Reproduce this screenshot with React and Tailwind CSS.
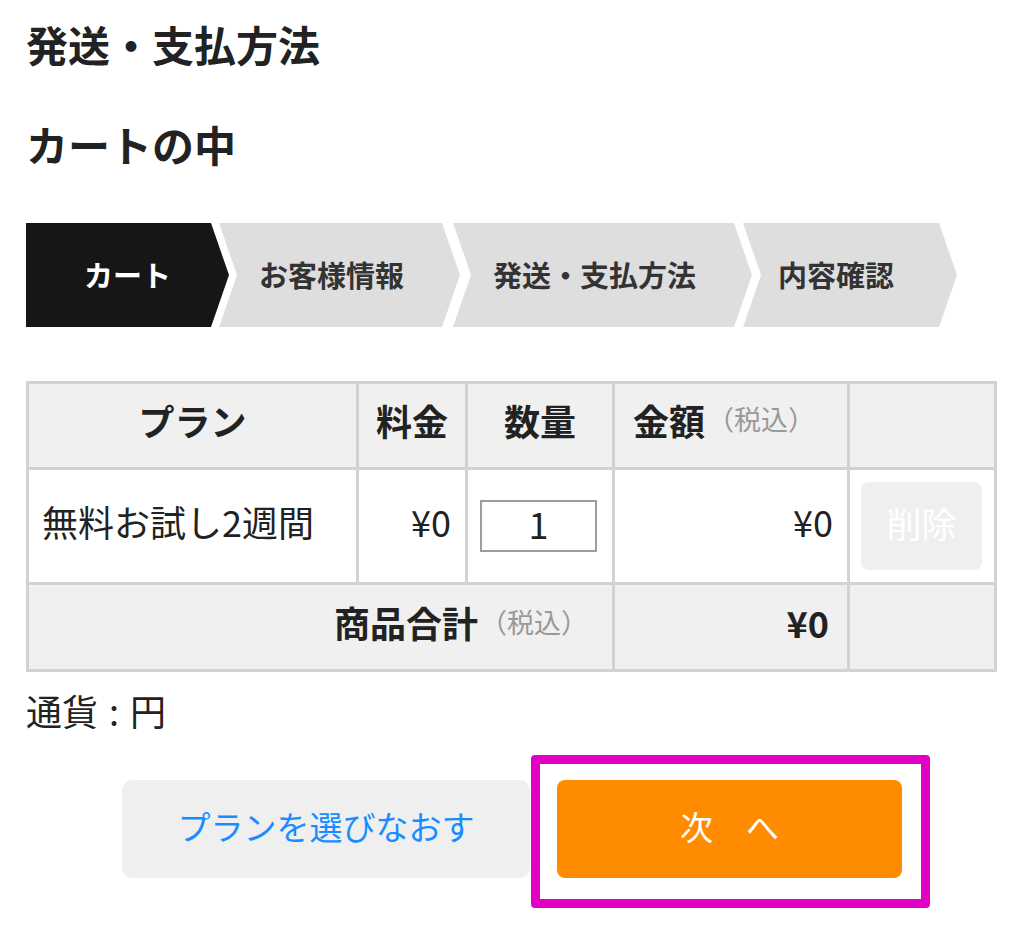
import React from "react";

const FONT = "font-['Noto_Sans_CJK_JP','Noto_Sans',sans-serif]";

const steps = [
  { label: "カート", active: true, cls: "w-[203px] pl-[58px]" },
  { label: "お客様情報", cls: "w-[241px] ml-[-10px] pl-[40px]" },
  { label: "発送・支払方法", cls: "w-[299px] ml-[-7px] pl-[40px]" },
  { label: "内容確認", cls: "w-[214px] ml-[-9px] pl-[35px]" },
];

function Steps() {
  return (
    <div className="flex h-[104px] mt-[54px]">
      {steps.map((s) => (
        <div
          key={s.label}
          className={
            "flex items-center text-[29px] font-bold " +
            s.cls +
            " " +
            (s.active
              ? "bg-[#161616] text-white [clip-path:polygon(0_0,calc(100%_-_18px)_0,100%_50%,calc(100%_-_18px)_100%,0_100%)]"
              : "bg-[#dedede] text-[#333] [clip-path:polygon(0_0,calc(100%_-_18px)_0,100%_50%,calc(100%_-_18px)_100%,0_100%,18px_50%)]")
          }
        >
          {s.label}
        </div>
      ))}
    </div>
  );
}

function CartTable() {
  return (
    <div className="mt-[54px] w-[971px] grid grid-cols-[327px_106px_144px_232px_144px] grid-rows-[83px_112px_84px] gap-[3px] p-[3px] bg-[#d2d2d2] text-[#222] text-[36px]">
      <div className="bg-[#f0f0f0] flex items-center justify-center pb-[12px] font-bold">プラン</div>
      <div className="bg-[#f0f0f0] flex items-center justify-center pb-[12px] font-bold">料金</div>
      <div className="bg-[#f0f0f0] flex items-center justify-center pb-[12px] font-bold">数量</div>
      <div className="bg-[#f0f0f0] flex items-center pl-[18px] pb-[12px] font-bold">
        金額<span className="text-[27px] font-normal text-[#999] ml-[2px]">（税込）</span>
      </div>
      <div className="bg-[#f0f0f0]"></div>

      <div className="bg-white flex items-center px-[13px] pb-[10px]">無料お試し2週間</div>
      <div className="bg-white flex items-center justify-end px-[14px] pb-[10px]">¥0</div>
      <div className="bg-white flex items-center pl-[12px]">
        <input
          type="text"
          defaultValue="1"
          className="w-[117px] h-[52px] border-2 border-[#9e9e9e] text-center text-[36px] leading-[40px] pb-[6px] text-[#222] outline-none"
        />
      </div>
      <div className="bg-white flex items-center justify-end px-[14px] pb-[10px]">¥0</div>
      <div className="bg-white flex items-center pl-[11px]">
        <button className="w-[121px] h-[88px] rounded-[8px] bg-[#efefef] text-white text-[35px] pb-[6px]">
          削除
        </button>
      </div>

      <div className="col-span-3 bg-[#f0f0f0] flex items-center justify-end pr-[24px] pb-[10px] font-bold">
        商品合計<span className="text-[27px] font-normal text-[#999] ml-[2px]">（税込）</span>
      </div>
      <div className="bg-[#f0f0f0] flex items-center justify-end px-[18px] pb-[10px] font-bold">¥0</div>
      <div className="bg-[#f0f0f0]"></div>
    </div>
  );
}

export default function App() {
  return (
    <div className={"w-[1024px] h-[945px] bg-white px-[26px] pt-[19px] " + FONT}>
      <h1 className="h-[50px] leading-[50px] text-[42px] font-bold text-[#222]">発送・支払方法</h1>
      <h2 className="mt-[50px] h-[50px] leading-[50px] text-[42px] font-bold text-[#222]">カートの中</h2>

      <Steps />
      <CartTable />

      <p className="mt-[16px] h-[44px] leading-[44px] text-[36px] text-[#222]">
        通貨<span className="inline-block mx-[11px]">:</span>円
      </p>

      <div className="mt-[48px] flex justify-center gap-[27px] -mx-[26px]">
        <button className="w-[408px] h-[98px] rounded-[10px] bg-[#efefef] text-[#1a8cff] text-[33px] pb-[4px]">
          プランを選びなおす
        </button>
        <div className="relative">
          <button className="w-[345px] h-[98px] rounded-[8px] bg-[#ff8c00] text-white text-[33px] pb-[4px]">
            次　へ
          </button>
          <div className="absolute left-[-26px] top-[-25px] right-[-28px] bottom-[-30px] border-[9px] border-[#e100c3] rounded-[4px] pointer-events-none"></div>
        </div>
      </div>
    </div>
  );
}
